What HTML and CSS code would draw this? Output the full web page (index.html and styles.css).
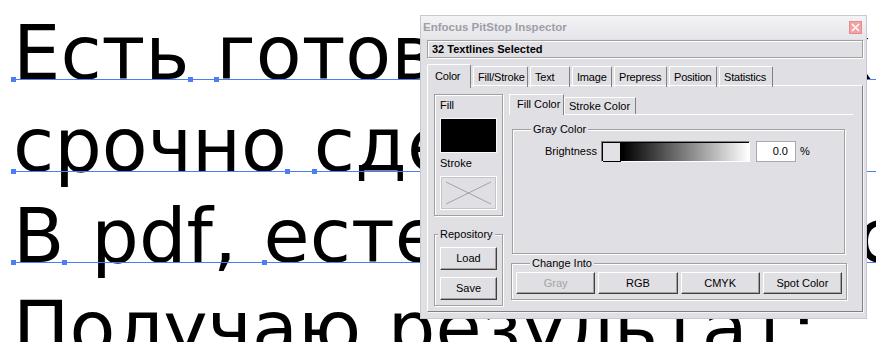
FILE: index.html
```html
<!DOCTYPE html>
<html lang="ru">
<head>
    <meta charset="UTF-8">
    <meta name="viewport" content="width=device-width, initial-scale=1.0">
    <title>Enfocus PitStop Inspector</title>
    <link rel="stylesheet" href="styles.css">
</head>
<body>
    <div class="doc">
        <div class="line"><i class="knot start"></i>Есть<i class="knot"></i> <i class="knot"></i>готовый файл, который</div>
        <div class="line"><i class="knot start"></i>срочно<i class="knot"></i> <i class="knot"></i>сделать.</div>
        <div class="line"><i class="knot start"></i>В<i class="knot"></i> pdf, <i class="knot"></i>естественно, есть</div>
        <div class="line">Получаю результат:</div>
    </div>

    <div class="inspector">
        <div class="titlebar">
            <span class="title">Enfocus PitStop Inspector</span>
            <span class="close">
                <svg width="9" height="9" viewBox="0 0 9 9">
                    <path d="M1 1 L8 8 M8 1 L1 8" stroke="#fff" stroke-width="1.6"/>
                </svg>
            </span>
        </div>
        <div class="frame">
            <div class="status">32 Textlines Selected</div>
            <div class="tabs">
                <span class="tab active">Color</span>
                <span class="tab">Fill/Stroke</span>
                <span class="tab">Text</span>
                <span class="tab">Image</span>
                <span class="tab">Prepress</span>
                <span class="tab">Position</span>
                <span class="tab">Statistics</span>
            </div>
            <div class="panel">
                <div class="side">
                    <div class="swatches">
                        <div class="label">Fill</div>
                        <div class="swatch fill"></div>
                        <div class="label stroke-label">Stroke</div>
                        <div class="swatch none">
                            <svg width="55" height="32" viewBox="0 0 55 32">
                                <path d="M5 5 L50 27 M5 27 L50 5" stroke="#a4a4a8" stroke-width="1" fill="none"/>
                            </svg>
                        </div>
                    </div>
                    <fieldset class="group repo">
                        <legend>Repository</legend>
                        <div class="repo-buttons">
                            <button class="btn">Load</button>
                            <button class="btn">Save</button>
                        </div>
                    </fieldset>
                </div>
                <div class="main">
                    <div class="subtabs">
                        <span class="subtab active">Fill Color</span>
                        <span class="subtab">Stroke Color</span>
                    </div>
                    <div class="subpanel">
                        <fieldset class="group gray">
                            <legend>Gray Color</legend>
                            <div class="slider-row">
                                <span class="slider-label">Brightness</span>
                                <div class="slider"><div class="thumb"></div></div>
                                <div class="field">0.0</div>
                                <span>%</span>
                            </div>
                        </fieldset>
                        <fieldset class="group change">
                            <legend>Change Into</legend>
                            <div class="change-buttons">
                                <button class="btn" disabled>Gray</button>
                                <button class="btn">RGB</button>
                                <button class="btn">CMYK</button>
                                <button class="btn">Spot Color</button>
                            </div>
                        </fieldset>
                    </div>
                </div>
            </div>
        </div>
    </div>
</body>
</html>
```

FILE: styles.css
```css
body {
    margin: 0;
    background: #fff;
    height: 342px;
    overflow: hidden;
    position: relative;
}
.doc {
    padding: 8px 0 0 13px;
    font-family: "DejaVu Sans", sans-serif;
    font-size: 75px;
    line-height: 91.5px;
    word-spacing: 3px;
    color: #000;
    white-space: nowrap;
    overflow: hidden;
}
.knot {
    display: inline-block;
    width: 0;
    height: 0;
    position: relative;
}
.knot::after {
    content: "";
    position: absolute;
    left: -2px;
    top: -2px;
    width: 5px;
    height: 5px;
    background: #4b7ef3;
}
.knot.start::before {
    content: "";
    position: absolute;
    left: 0;
    top: 0;
    width: 900px;
    height: 1px;
    background: #4b7ef3;
}

/* inspector window */
.inspector {
    position: absolute;
    left: 420px;
    top: 15px;
    width: 447px;
    height: 304px;
    box-sizing: border-box;
    border: 1px solid #c8c8d2;
    background: #e0dfe3;
    font-family: "Liberation Sans", Arial, sans-serif;
    font-size: 11px;
    line-height: 13px;
    color: #000;
}
.titlebar {
    height: 23px;
    display: flex;
    align-items: center;
    justify-content: space-between;
    padding: 0 4px 0 2px;
    background: linear-gradient(#f3f3f6, #e6e6ea);
}
.title {
    font-weight: bold;
    font-size: 11.5px;
    color: #9e9ea6;
}
.close {
    width: 13px;
    height: 13px;
    box-sizing: border-box;
    border: 1px solid #e88a8a;
    background: #f3a2a2;
    display: flex;
    align-items: center;
    justify-content: center;
}
.close svg {
    display: block;
}
.frame {
    padding: 1px 3px 0 6px;
}
.status {
    height: 18px;
    box-sizing: border-box;
    border: 1px solid #a0a0a0;
    box-shadow: inset 1px 1px 0 #fff, 1px 1px 0 #fff;
    font-weight: bold;
    padding: 2px 0 0 4px;
}
.tabs {
    display: grid;
    grid-template-columns: 44px 55px 40px 40px 53px 48px 54px;
    column-gap: 2px;
    align-items: end;
    height: 21px;
    margin-top: 6px;
}
.tab {
    height: 21px;
    box-sizing: border-box;
    border: 1px solid #fff;
    border-right-color: #808080;
    border-bottom: 0;
    border-radius: 2px 2px 0 0;
    padding: 4px 0 0 4px;
    letter-spacing: -0.2px;
    white-space: nowrap;
}
.tab.active {
    height: 24px;
    margin-bottom: -1px;
    padding: 5px 0 0 7px;
    position: relative;
    z-index: 1;
    background: #e0dfe3;
}
.panel {
    height: 227px;
    box-sizing: border-box;
    border: 1px solid;
    border-color: #fff #808080 #808080 #fff;
    box-shadow: 1px 1px 0 #f4f4f6;
    display: grid;
    grid-template-columns: 69px 1fr;
    column-gap: 6px;
    padding: 8px 9px 0 6px;
}

/* left column */
.swatches {
    height: 122px;
    box-sizing: border-box;
    border: 1px solid #a0a0a0;
    box-shadow: inset 1px 1px 0 #fff, 1px 1px 0 #fff;
    padding: 4px 5px 0;
}
.swatch {
    height: 35px;
    margin-top: 6px;
    box-sizing: border-box;
    border: 1px solid #f8f8f8;
}
.swatch.fill {
    background: #000;
}
.swatch.none {
    height: 34px;
    border-color: #fff;
    box-shadow: inset 0 0 0 1px #c4c4c8;
}
.swatch svg {
    display: block;
}
.stroke-label {
    margin-top: 4px;
}

.group {
    margin: 0;
    padding: 0;
    border: 1px solid #a0a0a0;
    box-shadow: inset 1px 1px 0 #fff, 1px 1px 0 #fff;
    min-width: 0;
}
.group legend {
    padding: 0 2px;
    background: #e0dfe3;
}
.repo {
    margin-top: 12px;
}
.repo legend {
    margin-left: 3px;
}
.repo-buttons {
    display: flex;
    flex-direction: column;
    gap: 7px;
    padding: 6px 5px 5px;
}
.btn {
    height: 23px;
    padding: 0;
    font: inherit;
    color: #000;
    background: #e0dfe3;
    border: 1px solid;
    border-color: #fff #404040 #404040 #fff;
    box-shadow: inset -1px -1px 0 #a0a0a0;
}
.btn:disabled {
    color: #a3a3a3;
}

/* right column */
.subtabs {
    display: flex;
    align-items: flex-end;
    height: 20px;
}
.subtab {
    height: 17px;
    box-sizing: border-box;
    border: 1px solid #fff;
    border-right-color: #808080;
    border-bottom: 0;
    padding: 2px 5px 0 4px;
}
.subtab.active {
    height: 21px;
    width: 55px;
    margin-bottom: -1px;
    padding: 3px 0 0 7px;
    position: relative;
    z-index: 1;
    background: #e0dfe3;
}
.subpanel {
    border-top: 1px solid #fff;
    padding-top: 8px;
}
.gray {
    height: 131px;
    box-sizing: border-box;
    margin: 0 8px 0 3px;
}
.gray legend {
    margin-left: 18px;
}
.slider-row {
    display: flex;
    align-items: center;
    height: 21px;
    padding: 5px 0 0 32px;
}
.slider {
    width: 149px;
    height: 21px;
    box-sizing: border-box;
    margin-left: 4px;
    border: 1px solid;
    border-color: #808080 #fff #fff #808080;
    box-shadow: inset 1px 1px 0 #000;
    background: linear-gradient(to right, #000 14%, #fff 100%);
    padding: 1px 0 0 1px;
}
.thumb {
    width: 17px;
    height: 18px;
    background: #e2e1e5;
    border-right: 1px solid #000;
    border-bottom: 1px solid #000;
}
.field {
    width: 40px;
    height: 21px;
    box-sizing: border-box;
    margin: 0 4px 0 6px;
    border: 1px solid #a8a8b0;
    background: #fff;
    text-align: right;
    padding: 3px 7px 0 0;
}
.change {
    margin: 3px 6px 0 2px;
}
.change legend {
    margin-left: 18px;
}
.change-buttons {
    display: grid;
    grid-template-columns: repeat(4, 1fr);
    column-gap: 3px;
    padding: 2px 4px 5px;
}
.change .btn {
    height: 22px;
}
```
